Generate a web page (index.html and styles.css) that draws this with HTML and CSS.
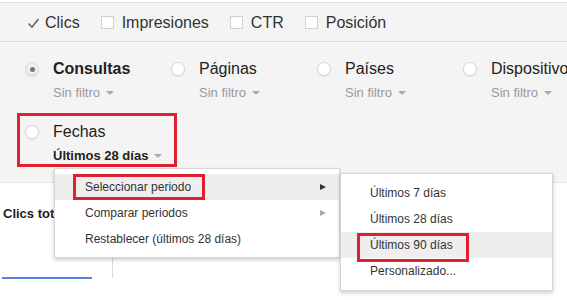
FILE: index.html
```html
<!DOCTYPE html>
<html lang="es">
<head>
    <meta charset="UTF-8">
    <meta name="viewport" content="width=device-width, initial-scale=1.0">
    <title>Search Console - Rendimiento</title>
    <link rel="stylesheet" href="styles.css">
</head>
<body>
    <div class="page">
        <div class="metrics">
            <div class="metric">
                <svg class="tick" width="13" height="12" viewBox="0 0 13 12"><polyline points="1.5,6.5 5,10 11.5,2" fill="none" stroke="#666" stroke-width="1.6"/></svg>
                <span>Clics</span>
            </div>
            <div class="metric"><span class="box"></span><span>Impresiones</span></div>
            <div class="metric"><span class="box"></span><span>CTR</span></div>
            <div class="metric"><span class="box"></span><span>Posición</span></div>
        </div>

        <div class="filters">
            <div class="row">
                <div class="item">
                    <span class="radio selected"></span>
                    <div class="labels">
                        <div class="name bold">Consultas</div>
                        <div class="sub">Sin filtro <span class="caret"></span></div>
                    </div>
                </div>
                <div class="item">
                    <span class="radio"></span>
                    <div class="labels">
                        <div class="name">Páginas</div>
                        <div class="sub">Sin filtro <span class="caret"></span></div>
                    </div>
                </div>
                <div class="item">
                    <span class="radio"></span>
                    <div class="labels">
                        <div class="name">Países</div>
                        <div class="sub">Sin filtro <span class="caret"></span></div>
                    </div>
                </div>
                <div class="item">
                    <span class="radio"></span>
                    <div class="labels">
                        <div class="name">Dispositivos</div>
                        <div class="sub">Sin filtro <span class="caret"></span></div>
                    </div>
                </div>
            </div>
            <div class="item marked">
                <span class="radio"></span>
                <div class="labels">
                    <div class="name">Fechas</div>
                    <div class="sub dark">Últimos 28 días <span class="caret"></span></div>
                </div>
            </div>
        </div>

        <div class="summary">
            <div class="card">
                <div class="card-title">Clics totales</div>
                <div class="card-bar"></div>
            </div>
        </div>

        <!-- date menu, opened from "Fechas" -->
        <div class="menu menu-main">
            <div class="menu-item active"><span class="label outlined">Seleccionar periodo</span><span class="arrow"></span></div>
            <div class="menu-item"><span class="label">Comparar periodos</span><span class="arrow light"></span></div>
            <div class="menu-item"><span class="label">Restablecer (últimos 28 días)</span></div>
        </div>

        <div class="menu menu-sub">
            <div class="menu-item"><span class="label">Últimos 7 días</span></div>
            <div class="menu-item"><span class="label">Últimos 28 días</span></div>
            <div class="menu-item active"><span class="label outlined tall">Últimos 90 días</span></div>
            <div class="menu-item"><span class="label">Personalizado...</span></div>
        </div>
    </div>
</body>
</html>
```

FILE: styles.css
```css
body {
    margin: 0;
    font-family: "Liberation Sans", Arial, sans-serif;
    color: #222;
    background: #fff;
}
.page {
    position: relative;
    width: 567px;
    height: 300px;
    overflow: hidden;
}
.metrics {
    margin-top: 2px;
    height: 40px;
    border-top: 1px solid #dedede;
    border-bottom: 1px solid #dcdcdc;
    background: #f4f4f4;
    display: flex;
    align-items: center;
    gap: 21px;
    padding: 1px 0 0 27px;
    box-sizing: border-box;
    font-size: 16px;
    color: #333;
}
.metric {
    display: flex;
    align-items: center;
    gap: 8px;
}
.metric .tick {
    display: block;
    margin-right: -3px;
}
.box {
    width: 11px;
    height: 11px;
    border: 1px solid #d0d0d0;
    background: #fff;
}
.filters {
    background: #f4f4f4;
    border-bottom: 1px solid #e6e6e6;
    padding: 18px 0 15px 17px;
}
.row {
    display: flex;
    padding-left: 8px;
    margin-bottom: 12px;
}
.item {
    display: flex;
    align-items: flex-start;
    gap: 14px;
    width: 146px;
    flex-shrink: 0;
}
.radio {
    width: 12px;
    height: 12px;
    margin-top: 2px;
    border: 1px solid #d8d8d8;
    border-radius: 50%;
    background: #fff;
    box-shadow: 0 1px 1px rgba(0, 0, 0, 0.08);
    position: relative;
    flex-shrink: 0;
}
.radio.selected {
    background: #eee;
}
.radio.selected::after {
    content: "";
    position: absolute;
    left: 3.5px;
    top: 3.5px;
    width: 5px;
    height: 5px;
    border-radius: 50%;
    background: #777;
}
.labels {
    display: flex;
    flex-direction: column;
    gap: 7px;
}
.name {
    font-size: 16px;
    line-height: 18px;
    white-space: nowrap;
    color: #222;
}
.bold {
    font-weight: bold;
}
.sub {
    font-size: 13px;
    line-height: 16px;
    color: #999;
    white-space: nowrap;
}
.sub.dark {
    color: #222;
    font-weight: bold;
}
.caret {
    display: inline-block;
    width: 0;
    height: 0;
    margin-left: 2px;
    vertical-align: 2px;
    border-left: 4px solid transparent;
    border-right: 4px solid transparent;
    border-top: 4px solid #aaa;
}
.marked {
    box-sizing: border-box;
    width: 160px;
    height: 54px;
    border: 3px solid #e0202e;
    padding: 7px 0 0 5px;
}
.summary {
    display: flex;
}
.card {
    width: 113px;
    height: 95px;
    border-right: 1px solid #dadada;
    padding-top: 23px;
    box-sizing: border-box;
}
.card-title {
    padding-left: 3px;
    font-size: 13px;
    font-weight: bold;
    line-height: 16px;
    color: #222;
    white-space: nowrap;
}
.card-bar {
    margin: 55px 0 0 2px;
    width: 90px;
    height: 2px;
    background: #4f86d8;
}
.menu {
    position: absolute;
    background: #fff;
    border: 1px solid #d6d6d6;
    box-shadow: 0 2px 4px rgba(0, 0, 0, 0.2);
    font-size: 12px;
    color: #333;
}
.menu-main {
    left: 54px;
    top: 168px;
    width: 284px;
    padding: 5px 0;
}
.menu-sub {
    left: 340px;
    top: 173px;
    width: 211px;
    padding: 6px 0;
}
.menu-item {
    height: 26px;
    display: flex;
    align-items: center;
    white-space: nowrap;
}
.menu-main .menu-item {
    padding: 0 13px 0 18px;
}
.menu-sub .menu-item {
    padding-left: 16px;
    align-items: flex-start;
}
.menu-item.active {
    background: #eee;
}
.label {
    display: inline-block;
    box-sizing: border-box;
    height: 26px;
    line-height: 20px;
    border: 3px solid transparent;
    padding: 0 11px 0 9px;
}
.menu-sub .label {
    padding: 0 13px 0 10px;
}
.menu-sub .label.tall {
    height: 29px;
    margin-top: 1px;
    line-height: 18px;
}
.outlined {
    border-color: #e0202e;
}
.arrow {
    margin-left: auto;
    width: 0;
    height: 0;
    border-top: 3.5px solid transparent;
    border-bottom: 3.5px solid transparent;
    border-left: 6px solid #333;
}
.arrow.light {
    border-left-color: #aaa;
}
```
